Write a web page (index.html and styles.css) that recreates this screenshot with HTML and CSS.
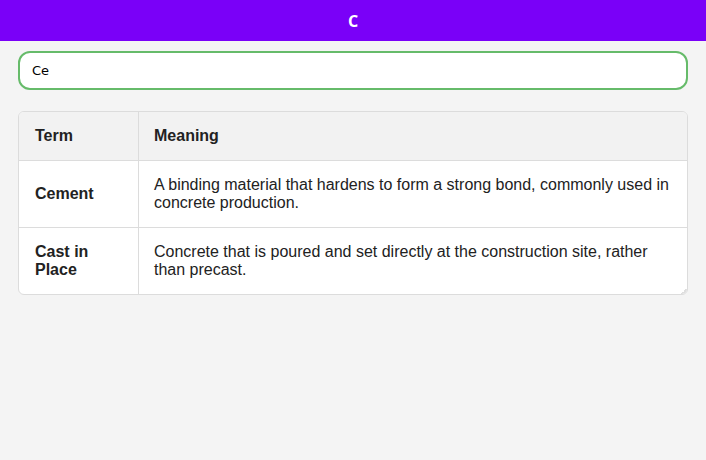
FILE: index.html
```html
<!DOCTYPE html>
<html>
<head>
<meta charset="utf-8">
<link rel="stylesheet" href="styles.css">
</head>
<body>
<header class="top">C</header>
<main class="content">
  <input class="search" type="text" value="Ce">
  <div class="table-wrap">
    <table class="terms">
      <thead>
        <tr><th class="col-term">Term</th><th>Meaning</th></tr>
      </thead>
      <tbody>
        <tr><td class="term">Cement</td><td>A binding material that hardens to form a strong bond, commonly used in concrete production.</td></tr>
        <tr><td class="term">Cast in Place</td><td>Concrete that is poured and set directly at the construction site, rather than precast.</td></tr>
      </tbody>
    </table>
  </div>
</main>
</body>
</html>
```

FILE: styles.css
```css
html, body {
  margin: 0;
  padding: 0;
  background: #f4f4f4;
}
.top {
  height: 41px;
  background: #7a00f8;
  color: #fff;
  font-family: "Open Sans", sans-serif;
  font-weight: bold;
  font-size: 16px;
  display: flex;
  align-items: center;
  justify-content: center;
}
.content {
  padding: 10px 18px;
  display: flex;
  flex-direction: column;
  gap: 21px;
}
.search {
  box-sizing: border-box;
  width: 100%;
  height: 39px;
  border: 2px solid #66bb6a;
  border-radius: 12px;
  background: #fff;
  padding: 0 12px;
  font-family: "DejaVu Sans", sans-serif;
  font-size: 13px;
  color: #000;
  outline: none;
  margin: 0;
}
.table-wrap {
  position: relative;
  border: 1px solid #dcdcdc;
  border-radius: 6px;
  background: #fff;
  overflow: hidden;
}
.table-wrap::after {
  content: "";
  position: absolute;
  right: 0;
  bottom: 0;
  width: 6px;
  height: 6px;
  background: linear-gradient(135deg, transparent 50%, #dedede 50%);
}
.terms {
  width: 100%;
  border-collapse: collapse;
  font-family: "Liberation Sans", Arial, sans-serif;
  font-size: 16px;
  color: #222;
}
.terms th, .terms td {
  padding: 15px 16px;
  text-align: left;
  vertical-align: middle;
  border-bottom: 1px solid #dcdcdc;
}
.terms th + th, .terms td + td {
  border-left: 1px solid #dcdcdc;
  padding-left: 15px;
}
.terms tbody tr:last-child td {
  border-bottom: none;
}
.terms thead th {
  background: #f2f2f2;
  font-weight: bold;
}
.col-term {
  width: 87px;
}
.term {
  font-weight: bold;
}
```
